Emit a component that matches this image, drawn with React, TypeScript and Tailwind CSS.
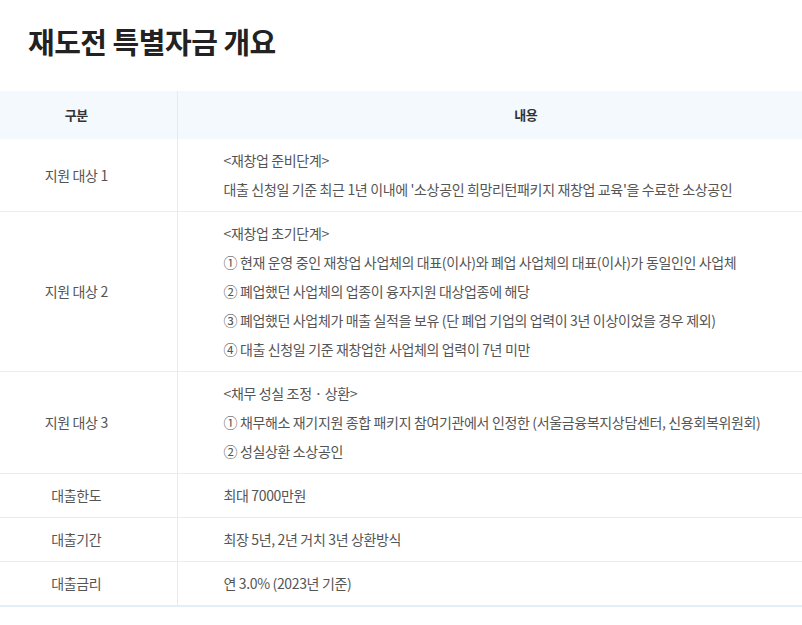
import React from 'react';

type Row = {
  label: string;
  lines: string[];
};

const rows: Row[] = [
  {
    label: '지원 대상 1',
    lines: ['<재창업 준비단계>', "대출 신청일 기준 최근 1년 이내에 '소상공인 희망리턴패키지 재창업 교육'을 수료한 소상공인"],
  },
  {
    label: '지원 대상 2',
    lines: [
      '<재창업 초기단계>',
      '① 현재 운영 중인 재창업 사업체의 대표(이사)와 폐업 사업체의 대표(이사)가 동일인인 사업체',
      '② 폐업했던 사업체의 업종이 융자지원 대상업종에 해당',
      '③ 폐업했던 사업체가 매출 실적을 보유 (단 폐업 기업의 업력이 3년 이상이었을 경우 제외)',
      '④ 대출 신청일 기준 재창업한 사업체의 업력이 7년 미만',
    ],
  },
  {
    label: '지원 대상 3',
    lines: [
      '<채무 성실 조정 · 상환>',
      '① 채무해소 재기지원 종합 패키지 참여기관에서 인정한 (서울금융복지상담센터, 신용회복위원회)',
      '② 성실상환 소상공인',
    ],
  },
  { label: '대출한도', lines: ['최대 7000만원'] },
  { label: '대출기간', lines: ['최장 5년, 2년 거치 3년 상환방식'] },
  { label: '대출금리', lines: ['연 3.0% (2023년 기준)'] },
];

export default function App() {
  return (
    <div className="min-h-screen w-full overflow-hidden bg-white font-['Noto_Sans_CJK_KR','Noto_Sans',sans-serif]">
      <div className="w-[878px]">
        <h1 className="h-[91px] pl-[28px] pt-[20px] text-[29px] font-bold leading-[42px] tracking-[-0.5px] text-[#222]">
          재도전 특별자금 개요
        </h1>
        <table className="w-full border-collapse border-b-2 border-b-[#e3eef8] text-[14px] tracking-[-0.35px] text-[#555]">
          <thead>
            <tr className="h-[48px] bg-[#f3f9fd]">
              <th className="w-[177px] border-r border-r-[#e3ecf4] pr-[24px] text-[13px] font-bold text-[#333]">구분</th>
              <th className="pr-[4px] text-[13px] font-bold text-[#333]">내용</th>
            </tr>
          </thead>
          <tbody>
            {rows.map((row) => (
              <tr key={row.label} className="border-t border-t-[#e6eef5] first:border-t-0">
                <td className="border-r border-r-[#e3ecf4] pr-[24px] text-center align-middle">{row.label}</td>
                <td className="py-[7px] pl-[46px] leading-[29px]">
                  {row.lines.map((line) => (
                    <div key={line} className="whitespace-nowrap">
                      {line}
                    </div>
                  ))}
                </td>
              </tr>
            ))}
          </tbody>
        </table>
      </div>
    </div>
  );
}
